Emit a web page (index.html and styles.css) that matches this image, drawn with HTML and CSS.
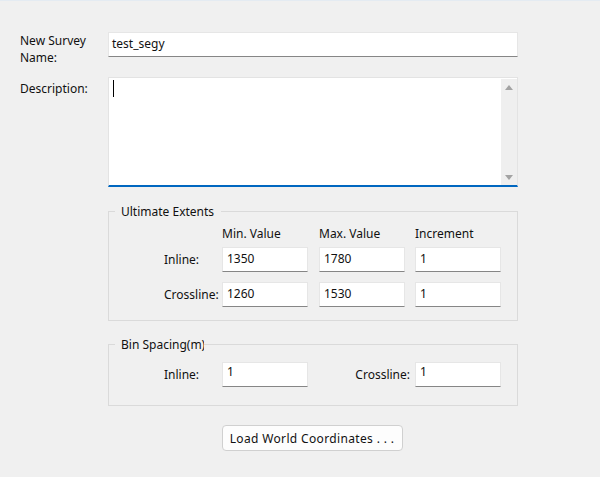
FILE: index.html
```html
<!DOCTYPE html>
<html>
<head>
<meta charset="utf-8">
<link rel="stylesheet" href="styles.css">
</head>
<body>
<div class="topline"></div>
<div class="form">
  <div class="row row-name">
    <label class="lbl">New Survey<br>Name:</label>
    <div class="input wide">test_segy</div>
  </div>
  <div class="row row-desc">
    <label class="lbl lbl-desc">Description:</label>
    <div class="textarea">
      <div class="ta-body"><span class="caret"></span></div>
      <div class="scrollbar">
        <span class="arrow up"></span>
        <span class="arrow down"></span>
      </div>
    </div>
  </div>
  <div class="row">
    <div></div>
    <fieldset class="group extents">
      <legend class="legend">Ultimate Extents</legend>
      <div class="ext-grid">
        <span></span>
        <span class="colhead">Min. Value</span>
        <span class="colhead">Max. Value</span>
        <span class="colhead">Increment</span>
        <span class="rowlbl">Inline:</span>
        <div class="input cell">1350</div>
        <div class="input cell">1780</div>
        <div class="input cell">1</div>
        <span class="rowlbl second">Crossline:</span>
        <div class="input cell second">1260</div>
        <div class="input cell second">1530</div>
        <div class="input cell second">1</div>
      </div>
    </fieldset>
  </div>
  <div class="row">
    <div></div>
    <fieldset class="group bins">
      <legend class="legend clip">Bin Spacing(m)</legend>
      <div class="bin-row">
        <span class="rowlbl">Inline:</span>
        <div class="input cell top">1</div>
        <span class="rowlbl right">Crossline:</span>
        <div class="input cell top">1</div>
      </div>
    </fieldset>
  </div>
  <div class="row">
    <div></div>
    <div class="btn-wrap"><button class="btn">Load World Coordinates . . .</button></div>
  </div>
</div>
</body>
</html>
```

FILE: styles.css
```css
html, body {
  margin: 0;
  padding: 0;
  background: #f0f0f0;
  font-family: "Noto Sans", "Open Sans", sans-serif;
  font-size: 12px;
  color: #111;
  width: 600px;
  height: 477px;
  overflow: hidden;
}
.topline {
  height: 1px;
  background: #e4ebf2;
}
.form {
  padding: 31px 0 0 20px;
  display: flex;
  flex-direction: column;
}
.row {
  display: grid;
  grid-template-columns: 88px 410px;
  align-items: start;
}
.lbl {
  line-height: 17px;
}
.lbl-desc {
  padding-top: 3px;
}
.input {
  box-sizing: border-box;
  background: #fff;
  border: 1px solid #e6e6e6;
  border-bottom: 1px solid #868686;
  height: 25px;
  line-height: 22px;
  padding: 0 4px;
  white-space: nowrap;
}
.input.wide {
  padding-left: 3px;
}
.input.cell {
  width: 86px;
}
.input.top {
  line-height: 18px;
}
.row-desc {
  margin-top: 11px;
}
.textarea {
  box-sizing: border-box;
  height: 110px;
  background: #fff;
  border: 1px solid #e3e3e3;
  border-bottom: 2px solid #0067c0;
  display: flex;
}
.ta-body {
  flex: 1;
  padding: 2px 0 0 4px;
}
.caret {
  display: block;
  width: 1px;
  height: 17px;
  background: #000;
}
.scrollbar {
  width: 16px;
  margin: 1px 0 0;
  background: #efefef;
  display: flex;
  flex-direction: column;
  justify-content: space-between;
  align-items: center;
  padding: 6px 0 5px;
}
.arrow {
  width: 0;
  height: 0;
  border-left: 4px solid transparent;
  border-right: 4px solid transparent;
}
.arrow.up {
  border-bottom: 5px solid #a3a3a3;
}
.arrow.down {
  border-top: 5px solid #a3a3a3;
}
.group {
  margin: 16px 0 0;
  padding: 0;
  border: 1px solid #dadada;
  min-width: 0;
}
.legend {
  margin-left: 6px;
  padding: 0 7px 0 6px;
  line-height: 17px;
}
.legend.clip {
  width: 89px;
  box-sizing: border-box;
  padding-right: 0;
  overflow: hidden;
  white-space: nowrap;
}
.ext-grid {
  display: grid;
  grid-template-columns: 58px 97px 96px 86px;
  padding: 5px 0 13px 55px;
  align-items: center;
}
.colhead {
  line-height: 17px;
  margin-bottom: 5px;
}
.rowlbl {
  white-space: nowrap;
  overflow: hidden;
  max-width: 55px;
}
.second {
  margin-top: 10px;
}
.bin-row {
  display: grid;
  grid-template-columns: 58px 86px 1fr 86px;
  align-items: center;
  padding: 9px 16px 18px 55px;
}
.rowlbl.right {
  max-width: none;
  text-align: right;
  padding-right: 5px;
}
.bins {
  margin-top: 15px;
}
.btn-wrap {
  display: flex;
  justify-content: center;
  padding-top: 19px;
}
.btn {
  font-family: inherit;
  font-size: 12px;
  letter-spacing: 0.35px;
  color: #111;
  width: 181px;
  height: 26px;
  background: #fdfdfd;
  border: 1px solid #d0d0d0;
  border-radius: 4px;
  padding: 0;
  margin-right: 2px;
}
```
